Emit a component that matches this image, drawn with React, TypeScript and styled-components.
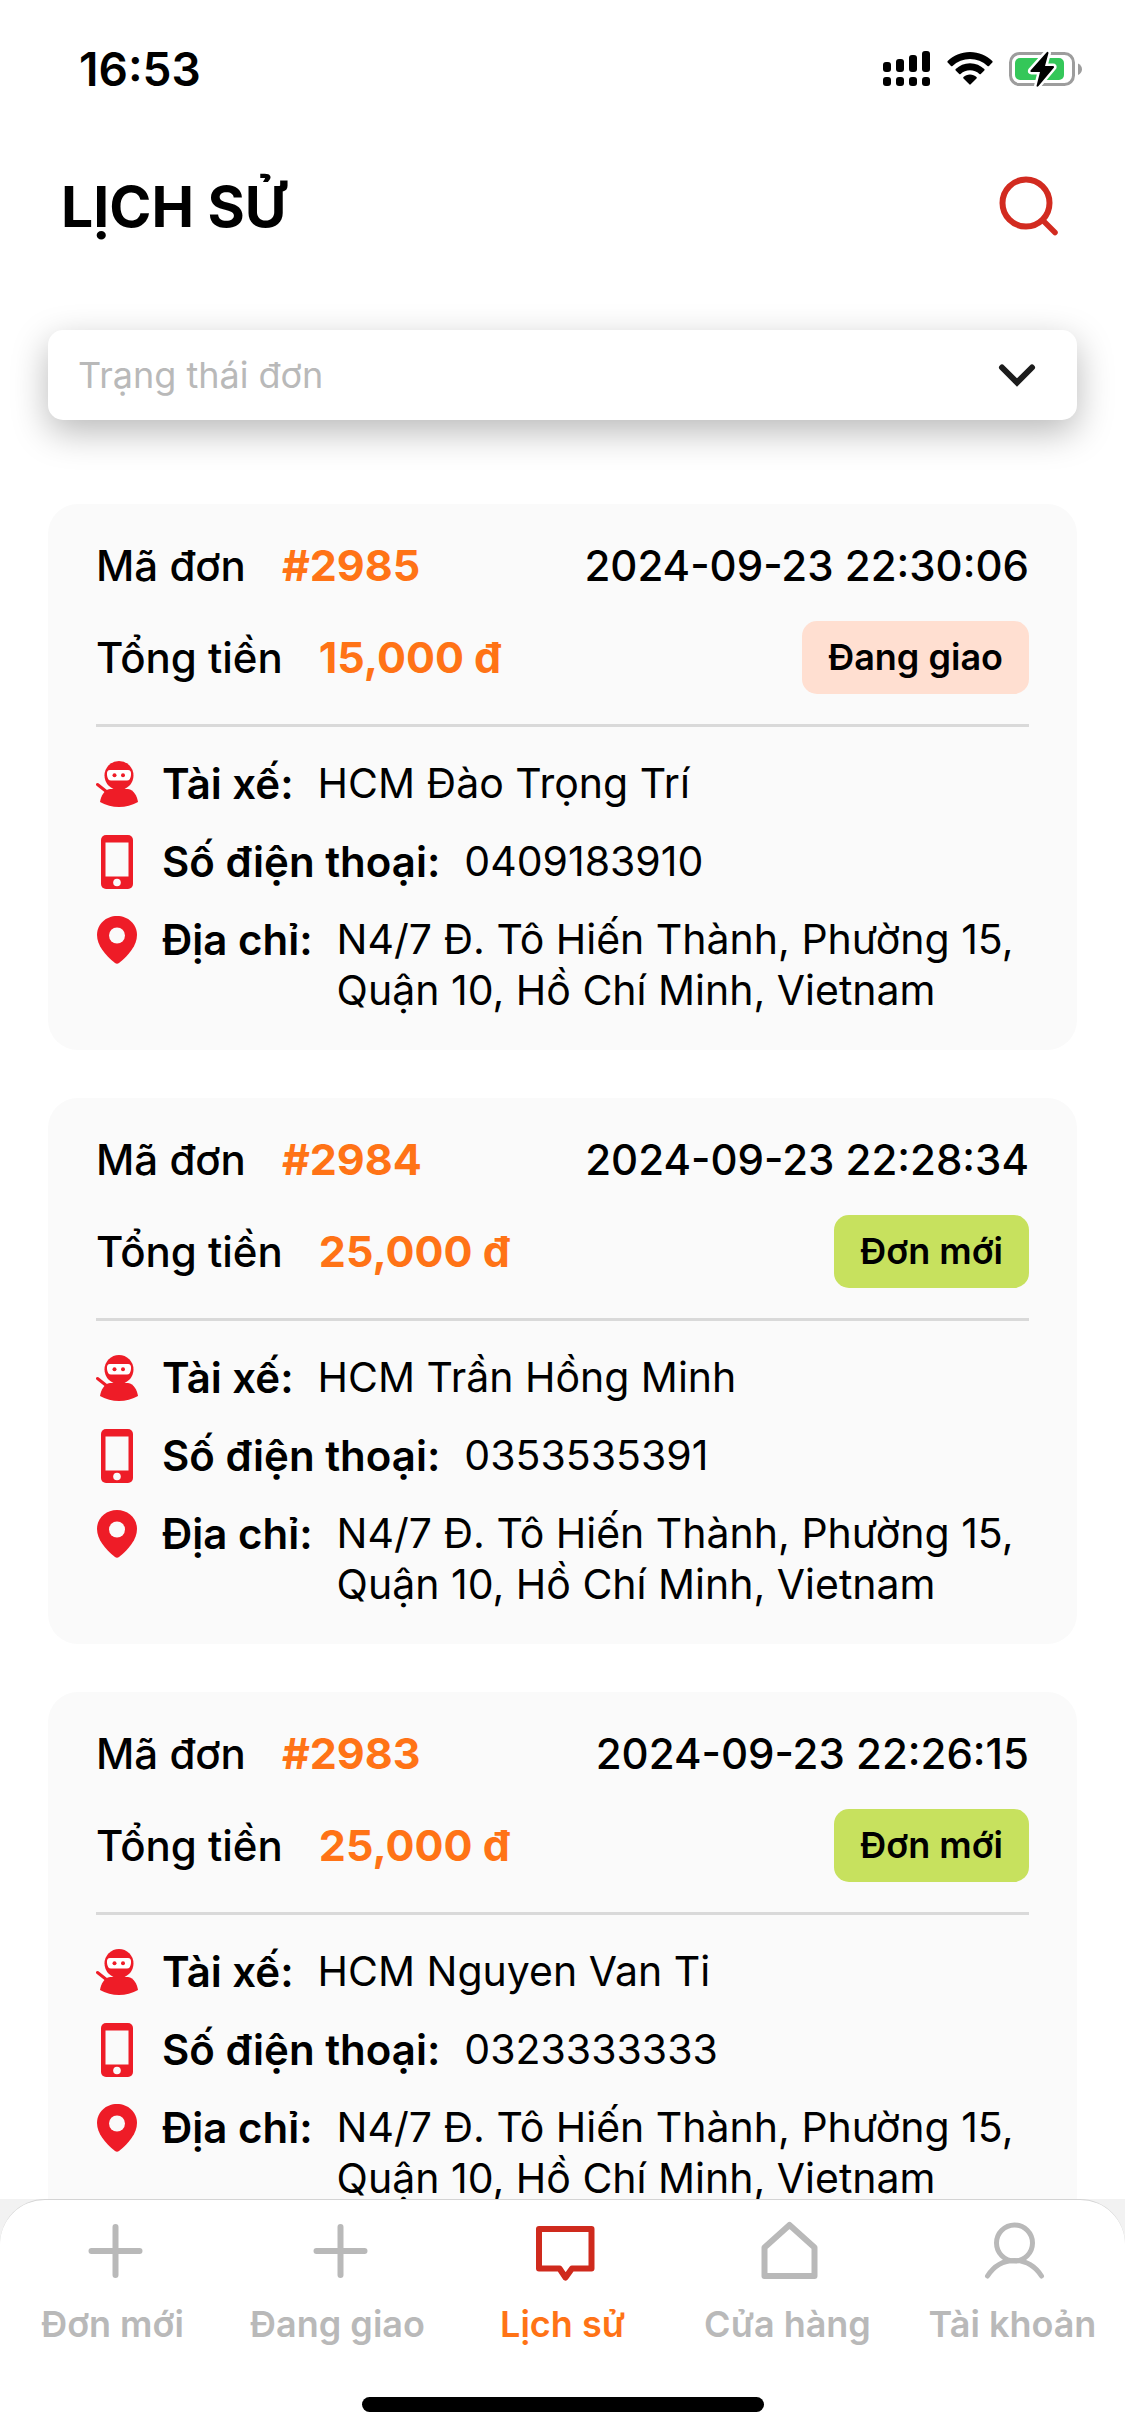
import React, { useState } from 'react';
import styled, { createGlobalStyle } from 'styled-components';

const GlobalStyle = createGlobalStyle`
  * {
    box-sizing: border-box;
  }

  body {
    margin: 0;
    background: #fff;
    color: #000;
    font-family: Inter, 'Noto Sans', sans-serif;
  }
`;

const Screen = styled.div`
  display: flex;
  flex-direction: column;
  height: 100vh;
  overflow: hidden;
`;
const StatusBar = styled.div`
  display: flex;
  flex: none;
  justify-content: space-between;
  align-items: center;
  height: 138px;
  padding: 0 42px 0 79px;
`;
const Clock = styled.time`
  font-size: 46px;
  font-weight: 600;
`;
const StatusIcons = styled.div`
  display: flex;
  align-items: center;
  gap: 16px;
`;
const Header = styled.header`
  display: flex;
  flex: none;
  justify-content: space-between;
  align-items: center;
  height: 138px;
  padding: 0 64px 0 61px;
`;
const Title = styled.h1`
  margin: 0;
  font-size: 57px;
  font-weight: 700;
  line-height: 68px;
`;
const IconButton = styled.button`
  display: flex;
  padding: 0;
  border: 0;
  background: none;
`;
const Filter = styled.div`
  display: grid;
  flex: none;
  align-items: center;
  margin: 54px 48px 84px;
  border-radius: 15px;
  background: #fff;
  box-shadow: 0 12px 36px rgba(0, 0, 0, 0.28);

  > * {
    grid-area: 1 / 1;
  }

  > svg {
    justify-self: end;
    margin-right: 40px;
    pointer-events: none;
  }
`;
const Select = styled.select`
  width: 100%;
  height: 90px;
  padding: 0 30px;
  border: 0;
  border-radius: 15px;
  background: none;
  color: #b9b9b9;
  font-family: inherit;
  font-size: 36px;
  appearance: none;
`;
const List = styled.main`
  display: flex;
  flex: 1;
  flex-direction: column;
  gap: 48px;
  min-height: 0;
  padding: 0 48px;
  overflow: hidden;
`;
const Card = styled.article`
  flex: none;
  padding: 36px 48px 34px;
  border-radius: 30px;
  background: #fafafa;
`;
const Summary = styled.div`
  display: flex;
  flex-direction: column;
  gap: 30px;
  padding-bottom: 30px;
  border-bottom: 3px solid #d9d9d9;
`;
const Row = styled.div`
  display: flex;
  justify-content: space-between;
  align-items: center;
  font-size: 42px;
  font-weight: 500;
  line-height: 51px;
`;
const Pair = styled.div`
  display: flex;
  gap: 36px;
`;
const Accent = styled.strong`
  color: #ff7316;
  font-size: 43px;
  font-weight: 700;
`;
const Badge = styled.span<{ $color: string }>`
  padding: 11px 26px;
  border-radius: 15px;
  background: ${({ $color }) => $color};
  font-size: 36px;
  font-weight: 600;
`;
const Details = styled.div`
  display: flex;
  flex-direction: column;
  gap: 27px;
  padding-top: 31px;
  font-size: 41px;
  line-height: 51px;
`;
const Detail = styled.div`
  display: flex;
  align-items: flex-start;
`;
const DetailIcon = styled.span`
  display: flex;
  flex: none;
  justify-content: center;
  align-items: center;
  width: 42px;
  height: 51px;
  margin-right: 24px;
`;
const Label = styled.span`
  flex: none;
  margin-right: 24px;
  font-size: 42px;
  font-weight: 600;
`;
const TabBar = styled.div`
  flex: none;
  background: #f2f2f2;
`;
const TabBarInner = styled.div`
  display: flex;
  flex-direction: column;
  align-items: center;
  padding-bottom: 24px;
  border-top: 1px solid #d4d4d4;
  border-radius: 45px 45px 0 0;
  background: #fff;
`;
const Tabs = styled.nav`
  display: grid;
  grid-template-columns: repeat(5, 1fr);
  width: 100%;
  height: 197px;
`;
const Tab = styled.a<{ $active?: boolean }>`
  display: flex;
  flex-direction: column;
  align-items: center;
  padding-top: 19px;
  color: ${({ $active }) => ($active ? '#ff7316' : '#b9b9b9')};
  font-size: 36px;
  font-weight: 600;
  line-height: 44px;
  text-decoration: none;
  white-space: nowrap;

  svg {
    margin-bottom: 19px;
    color: ${({ $active }) => ($active ? '#cf2a1d' : '#b9b9b9')};
  }
`;
const HomeIndicator = styled.div`
  width: 402px;
  height: 15px;
  border-radius: 8px;
  background: #000;
`;

const IconSignal = () => (
  <svg width="48" height="36" viewBox="0 0 48 36">
    <rect x="0" y="11" width="8" height="10" rx="3" />
    <rect x="13" y="8" width="8" height="13" rx="3" />
    <rect x="26" y="4" width="8" height="17" rx="3" />
    <rect x="39" y="0" width="8" height="21" rx="3" />
    <rect x="0" y="26" width="8" height="9" rx="3" />
    <rect x="13" y="26" width="8" height="9" rx="3" />
    <rect x="26" y="26" width="8" height="9" rx="3" />
    <rect x="39" y="26" width="8" height="9" rx="3" />
  </svg>
);

const IconWifi = () => (
  <svg width="46" height="34" viewBox="0 0 46 34">
    <path d="M23 0C32 0 39.500 3.500 45.300 9Q46 9.800 45.300 10.600L42 13.900Q41.300 14.500 40.500 13.900A25.500 25.500 0 0 0 5.500 13.900Q4.700 14.500 4 13.900L.7 10.600Q0 9.800.7 9C6.500 3.500 14 0 23 0Z" />
    <path d="M23 11.200C28.700 11.200 33.500 13.400 37.300 17Q38 17.700 37.300 18.400L33.800 21.900Q33.200 22.500 32.400 21.900A14 14 0 0 0 13.600 21.900Q12.800 22.500 12.200 21.900L8.700 18.400Q8 17.700 8.700 17C12.500 13.400 17.300 11.200 23 11.200Z" />
    <path d="M23 22.500C25.500 22.500 27.800 23.500 29.500 25Q30.200 25.700 29.500 26.400L23.700 32.300Q23 33 22.300 32.300L16.500 26.400Q15.800 25.700 16.500 25C18.200 23.500 20.500 22.500 23 22.500Z" />
  </svg>
);

const IconBattery = () => (
  <svg width="74" height="38" viewBox="0 0 74 38">
    <rect x="1.500" y="3.500" width="63" height="31" rx="9" fill="none" stroke="#9d9d9d" strokeWidth="3" />
    <path d="M69 13.500Q73 15.500 73 19.200T69 25Z" fill="#9d9d9d" />
    <rect x="6" y="8" width="49" height="22" rx="5" fill="#34c759" />
    <path
      d="M37.500 2.500L21.500 20.500Q21 22 22.500 22L31 22L27.500 36Q28 37.500 29.500 36L45 17.500Q45.500 16 44 16L36 16L39.500 3Q39 1 37.500 2.500Z"
      stroke="#fff"
      strokeWidth="5"
      strokeLinejoin="round"
      paintOrder="stroke"
    />
  </svg>
);

const IconSearch = () => (
  <svg width="64" height="64" viewBox="0 0 64 64" fill="none" stroke="#d22b20" strokeWidth="6" strokeLinecap="round">
    <circle cx="29" cy="28" r="23.500" />
    <path d="M46 45.500L58 57.500" strokeWidth="5.500" />
  </svg>
);

const IconChevron = () => (
  <svg width="40" height="26" viewBox="0 0 40 26" fill="none" stroke="#1c1c1c" strokeWidth="6" strokeLinecap="round">
    <path d="M5 5.500L20 20.500L35 5.500" />
  </svg>
);

const IconDriver = () => (
  <svg width="42" height="46" viewBox="0 0 42 46" fill="#ee1c27">
    <path d="M1.500 23.500L11 31" stroke="#ee1c27" strokeWidth="3" strokeLinecap="round" />
    <circle cx="23" cy="14.500" r="14.500" />
    <path d="M14 28H32C38 29 41 35 42 41Q33 46 23 46T4 41C5 35 8 29 14 28Z" />
    <path d="M14 9H32Q35.500 9 35 14Q34.500 19.500 31 19.500H15Q11.500 19.500 11 14Q10.500 9 14 9Z" fill="#fff" />
    <circle cx="18.500" cy="14.200" r="2" />
    <circle cx="27" cy="14.200" r="2" />
  </svg>
);

const IconPhone = () => (
  <svg width="32" height="54" viewBox="0 0 32 54">
    <rect width="32" height="54" rx="5" fill="#ee1c27" />
    <rect x="4.500" y="7.500" width="23" height="34" fill="#fafafa" />
    <circle cx="16" cy="47.500" r="3.800" fill="#fafafa" />
  </svg>
);

const IconPin = () => (
  <svg width="40" height="48" viewBox="0 0 40 48">
    <path d="M20 0C31 0 40 8 40 19C40 29 32 39 22 47Q20 48.500 18 47C8 39 0 29 0 19C0 8 9 0 20 0Z" fill="#ee1c27" />
    <circle cx="20" cy="19.500" r="8" fill="#fafafa" />
  </svg>
);

const TabIcon = ({ children }: { children: React.ReactNode }) => (
  <svg
    width="64"
    height="64"
    viewBox="0 0 64 64"
    fill="none"
    stroke="currentColor"
    strokeWidth="6"
    strokeLinecap="round"
    strokeLinejoin="round"
  >
    {children}
  </svg>
);

const plus = <path d="M34.500 8V56M10.500 32H58.500" />;
const chat = <path d="M8 10H60.500V49.500H41L34.500 58.500L28.500 49.500H8Z" />;
const house = <path d="M33.500 6L58.500 28.500V57H8.500V28.500Z" />;
const person = (
  <>
    <circle cx="33.500" cy="24" r="18" strokeWidth="5" />
    <path d="M6.500 57Q16.500 41.500 33.500 41.500T60.500 57" strokeWidth="5" />
  </>
);

const tabs = [
  { label: 'Đơn mới', icon: plus },
  { label: 'Đang giao', icon: plus },
  { label: 'Lịch sử', icon: chat, active: true },
  { label: 'Cửa hàng', icon: house },
  { label: 'Tài khoản', icon: person },
];

const badgeColors: Record<string, string> = {
  'Đang giao': '#ffdfd1',
  'Đơn mới': '#c7e15e',
};

const address = 'N4/7 Đ. Tô Hiến Thành, Phường 15, Quận 10, Hồ Chí Minh, Vietnam';

const orders = [
  {
    id: 2985,
    date: '2024-09-23 22:30:06',
    total: '15,000 đ',
    status: 'Đang giao',
    driver: 'HCM Đào Trọng Trí',
    phone: '0409183910',
    address,
  },
  {
    id: 2984,
    date: '2024-09-23 22:28:34',
    total: '25,000 đ',
    status: 'Đơn mới',
    driver: 'HCM Trần Hồng Minh',
    phone: '0353535391',
    address,
  },
  {
    id: 2983,
    date: '2024-09-23 22:26:15',
    total: '25,000 đ',
    status: 'Đơn mới',
    driver: 'HCM Nguyen Van Ti',
    phone: '0323333333',
    address,
  },
];

function OrderCard({ order }: { order: (typeof orders)[number] }) {
  return (
    <Card>
      <Summary>
        <Row>
          <Pair>
            <span>Mã đơn</span>
            <Accent>#{order.id}</Accent>
          </Pair>
          <time>{order.date}</time>
        </Row>
        <Row>
          <Pair>
            <span>Tổng tiền</span>
            <Accent>{order.total}</Accent>
          </Pair>
          <Badge $color={badgeColors[order.status]}>{order.status}</Badge>
        </Row>
      </Summary>
      <Details>
        <Detail>
          <DetailIcon>
            <IconDriver />
          </DetailIcon>
          <Label>Tài xế:</Label>
          <span>{order.driver}</span>
        </Detail>
        <Detail>
          <DetailIcon>
            <IconPhone />
          </DetailIcon>
          <Label>Số điện thoại:</Label>
          <span>{order.phone}</span>
        </Detail>
        <Detail>
          <DetailIcon>
            <IconPin />
          </DetailIcon>
          <Label>Địa chỉ:</Label>
          <span>{order.address}</span>
        </Detail>
      </Details>
    </Card>
  );
}

export default function App() {
  const [status, setStatus] = useState('');

  return (
    <Screen>
      <GlobalStyle />
      <StatusBar>
        <Clock>16:53</Clock>
        <StatusIcons>
          <IconSignal />
          <IconWifi />
          <IconBattery />
        </StatusIcons>
      </StatusBar>
      <Header>
        <Title>LỊCH SỬ</Title>
        <IconButton type="button" aria-label="Tìm kiếm">
          <IconSearch />
        </IconButton>
      </Header>
      <Filter>
        <Select aria-label="Trạng thái đơn" value={status} onChange={(e) => setStatus(e.target.value)}>
          <option value="">Trạng thái đơn</option>
          <option value="new">Đơn mới</option>
          <option value="shipping">Đang giao</option>
        </Select>
        <IconChevron />
      </Filter>
      <List>
        {orders
          .filter((o) => !status || o.status === (status === 'new' ? 'Đơn mới' : 'Đang giao'))
          .map((order) => (
            <OrderCard key={order.id} order={order} />
          ))}
      </List>
      <TabBar>
        <TabBarInner>
          <Tabs>
            {tabs.map(({ label, icon, active }) => (
              <Tab key={label} href="#" $active={active}>
                <TabIcon>{icon}</TabIcon>
                {label}
              </Tab>
            ))}
          </Tabs>
          <HomeIndicator />
        </TabBarInner>
      </TabBar>
    </Screen>
  );
}
